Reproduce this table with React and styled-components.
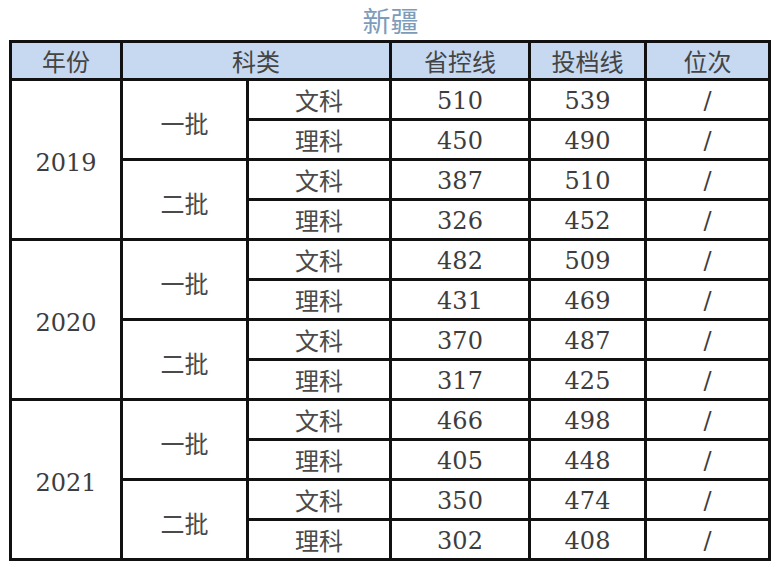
import React from "react";
import styled, { createGlobalStyle } from "styled-components";

const Global = createGlobalStyle`
  html, body { margin: 0; padding: 0; background: #ffffff; }
  body { font-family: "DejaVu Serif", "Noto Sans CJK SC", serif; }
`;

const Page = styled.div`
  width: 780px;
  height: 567px;
  padding: 0 0 0 9px;
  box-sizing: border-box;
  display: flex;
  flex-direction: column;
  align-items: flex-start;
`;

const Title = styled.h1`
  margin: 0;
  width: 763px;
  height: 40px;
  padding-top: 2px;
  box-sizing: border-box;
  line-height: 36px;
  text-align: center;
  font-family: "Noto Sans CJK SC", sans-serif;
  font-weight: 400;
  font-size: 28px;
  color: #7d9cba;
`;

const Table = styled.table`
  border-collapse: collapse;
  table-layout: fixed;
  width: 759px;
  border: 3px solid #111;
`;

const HeadRow = styled.tr`
  background: #c6d9f0;
`;

const HeadCell = styled.th`
  height: 34px;
  padding: 1px 0 0;
  border: 3px solid #111;
  font-family: "Noto Sans CJK SC", sans-serif;
  font-weight: 400;
  font-size: 24px;
  color: #444444;
  text-align: center;
  vertical-align: middle;
  line-height: 1;
`;

const pad = (p) => (p.$shift || 0) + (p.$num ? 3 : 0);

const Cell = styled.td`
  height: ${(p) => 37 - pad(p)}px;
  padding: ${(p) => pad(p)}px 0 0;
  border: 3px solid #111;
  text-align: center;
  vertical-align: middle;
  line-height: 1;
  color: ${(p) => (p.$num ? "#3d3d3d" : "#4a4a4a")};
  font-family: ${(p) =>
    p.$num ? '"DejaVu Serif", serif' : '"Noto Sans CJK SC", sans-serif'};
  font-size: 24px;
  font-weight: 400;
`;

const data = [
  {
    year: "2019",
    batches: [
      { name: "一批", rows: [["文科", "510", "539"], ["理科", "450", "490"]] },
      { name: "二批", rows: [["文科", "387", "510"], ["理科", "326", "452"]] },
    ],
  },
  {
    year: "2020",
    batches: [
      { name: "一批", rows: [["文科", "482", "509"], ["理科", "431", "469"]] },
      { name: "二批", rows: [["文科", "370", "487"], ["理科", "317", "425"]] },
    ],
  },
  {
    year: "2021",
    batches: [
      { name: "一批", rows: [["文科", "466", "498"], ["理科", "405", "448"]] },
      { name: "二批", rows: [["文科", "350", "474"], ["理科", "302", "408"]] },
    ],
  },
];

export default function App() {
  return (
    <>
      <Global />
      <Page>
        <Title>新疆</Title>
        <Table>
          <colgroup>
            <col style={{ width: 111 }} />
            <col style={{ width: 126 }} />
            <col style={{ width: 143 }} />
            <col style={{ width: 139 }} />
            <col style={{ width: 116 }} />
            <col style={{ width: 124 }} />
          </colgroup>
          <thead>
            <HeadRow>
              <HeadCell>年份</HeadCell>
              <HeadCell colSpan={2}>科类</HeadCell>
              <HeadCell>省控线</HeadCell>
              <HeadCell>投档线</HeadCell>
              <HeadCell>位次</HeadCell>
            </HeadRow>
          </thead>
          <tbody>
            {data.map((y) =>
              y.batches.map((b, bi) =>
                b.rows.map((r, ri) => (
                  <tr key={y.year + bi + ri}>
                    {bi === 0 && ri === 0 && (
                      <Cell $num rowSpan={4} $shift={3}>
                        {y.year}
                      </Cell>
                    )}
                    {ri === 0 && (
                      <Cell rowSpan={2} $shift={6}>
                        {b.name}
                      </Cell>
                    )}
                    <Cell>{r[0]}</Cell>
                    <Cell $num>{r[1]}</Cell>
                    <Cell $num>{r[2]}</Cell>
                    <Cell $num>/</Cell>
                  </tr>
                ))
              )
            )}
          </tbody>
        </Table>
      </Page>
    </>
  );
}
